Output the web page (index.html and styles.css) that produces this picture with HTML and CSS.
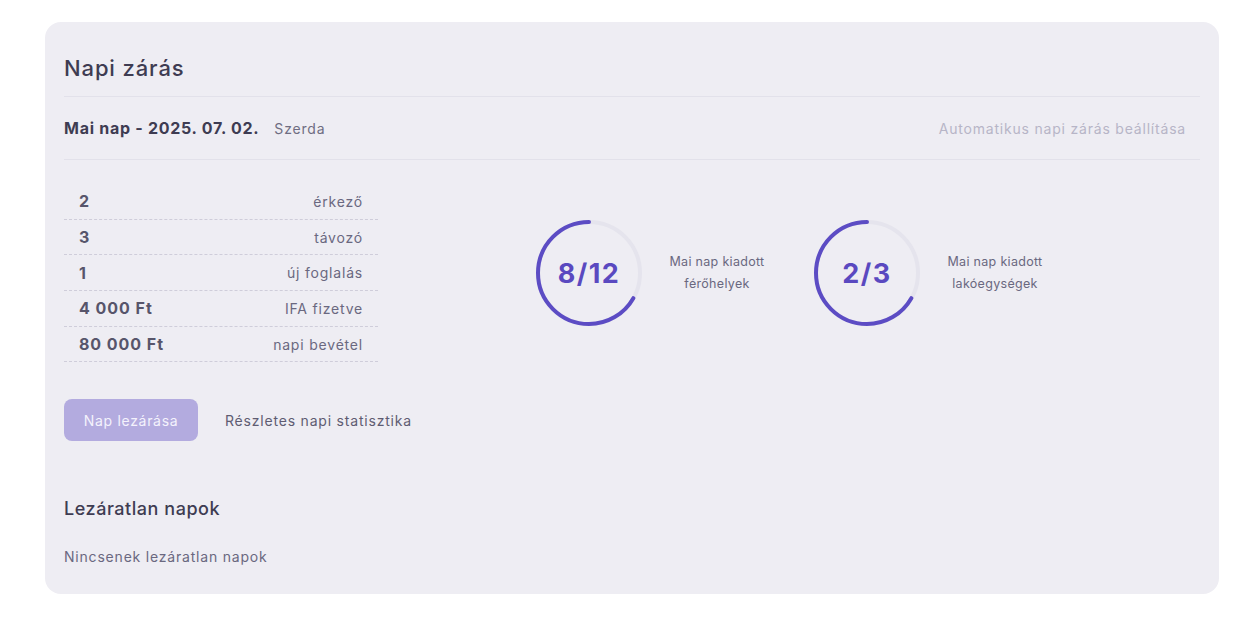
FILE: index.html
```html
<!DOCTYPE html>
<html lang="hu">
<head>
    <meta charset="UTF-8">
    <meta name="viewport" content="width=device-width, initial-scale=1.0">
    <title>Napi zárás</title>
    <link rel="stylesheet" href="styles.css">
</head>
<body>
    <div class="card">
        <h2 class="card-title">Napi zárás</h2>

        <div class="day-row">
            <div class="day-info">
                <span class="day-date">Mai nap - 2025. 07. 02.</span>
                <span class="day-name">Szerda</span>
            </div>
            <a href="#" class="auto-link">Automatikus napi zárás beállítása</a>
        </div>

        <div class="summary">
            <div class="stats">
                <div class="stat-row"><span class="stat-value">2</span><span class="stat-label">érkező</span></div>
                <div class="stat-row"><span class="stat-value">3</span><span class="stat-label">távozó</span></div>
                <div class="stat-row"><span class="stat-value">1</span><span class="stat-label">új foglalás</span></div>
                <div class="stat-row"><span class="stat-value">4 000 Ft</span><span class="stat-label">IFA fizetve</span></div>
                <div class="stat-row"><span class="stat-value">80 000 Ft</span><span class="stat-label">napi bevétel</span></div>
            </div>

            <div class="gauges">
                <div class="gauge">
                    <div class="ring">
                        <svg viewBox="0 0 108 108" width="108" height="108">
                            <circle class="ring-track" cx="54" cy="54" r="51"></circle>
                            <circle class="ring-bar" cx="54" cy="54" r="51" stroke-dasharray="213.6 320.4"></circle>
                        </svg>
                        <span class="ring-text">8/12</span>
                    </div>
                    <div class="gauge-label">Mai nap kiadott<br>férőhelyek</div>
                </div>
                <div class="gauge">
                    <div class="ring">
                        <svg viewBox="0 0 108 108" width="108" height="108">
                            <circle class="ring-track" cx="54" cy="54" r="51"></circle>
                            <circle class="ring-bar" cx="54" cy="54" r="51" stroke-dasharray="213.6 320.4"></circle>
                        </svg>
                        <span class="ring-text">2/3</span>
                    </div>
                    <div class="gauge-label">Mai nap kiadott<br>lakóegységek</div>
                </div>
            </div>
        </div>

        <div class="actions">
            <button class="close-button" disabled>Nap lezárása</button>
            <a href="#" class="stats-link">Részletes napi statisztika</a>
        </div>

        <h3 class="section-title">Lezáratlan napok</h3>
        <p class="empty-text">Nincsenek lezáratlan napok</p>
    </div>
</body>
</html>
```

FILE: styles.css
```css
/* Általános */
body {
    margin: 0;
    padding: 22px 29px 40px 45px;
    background-color: #ffffff;
    font-family: Inter, "Noto Sans", Arial, sans-serif;
    letter-spacing: 0.05em;
    color: #3e3c52;
}

.card {
    background-color: #eeedf3;
    border-radius: 16px;
    padding: 0 19px 27px 19px;
}

.card-title {
    margin: 0;
    padding: 32px 0 14px 0;
    font-size: 22px;
    line-height: 28px;
    font-weight: 500;
    letter-spacing: 0.04em;
    color: #3e3c52;
    border-bottom: 1px solid #e2e1ea;
}

/* Mai nap sor */
.day-row {
    display: flex;
    justify-content: space-between;
    align-items: center;
    padding: 20px 14px 19px 0;
    line-height: 22px;
    border-bottom: 1px solid #e2e1ea;
}

.day-info {
    display: flex;
    align-items: baseline;
    gap: 15px;
}

.day-date {
    font-size: 16px;
    font-weight: 700;
    letter-spacing: 0.045em;
    color: #3e3c52;
}

.day-name {
    font-size: 14px;
    color: #6f6d82;
}

.auto-link {
    font-size: 14px;
    color: #b7b5c7;
    text-decoration: none;
}

/* Összesítő */
.summary {
    display: flex;
    align-items: center;
    margin-top: 24px;
}

.stats {
    width: 314px;
}

.stat-row {
    display: flex;
    justify-content: space-between;
    align-items: center;
    height: 34.7px;
    padding: 0 15px;
    border-bottom: 1px dashed #cfcdda;
}

.stat-value {
    font-size: 16px;
    font-weight: 700;
    letter-spacing: 0.06em;
    color: #57556b;
}

.stat-label {
    font-size: 14px;
    color: #6a6880;
}

.gauges {
    display: flex;
    gap: 36px;
    margin-left: 157px;
}

.gauge {
    display: flex;
    align-items: center;
    gap: 14px;
}

.ring {
    position: relative;
    width: 108px;
    height: 108px;
}

.ring svg {
    display: block;
}

.ring-track {
    fill: none;
    stroke: #e5e4ed;
    stroke-width: 4;
}

.ring-bar {
    fill: none;
    stroke: #5c4cc4;
    stroke-width: 4;
    stroke-linecap: round;
    transform: rotate(-90deg) scaleY(-1);
    transform-origin: 54px 54px;
}

.ring-text {
    position: absolute;
    inset: 0;
    display: flex;
    align-items: center;
    justify-content: center;
    font-size: 27px;
    font-weight: 700;
    letter-spacing: 0.055em;
    color: #5a49c0;
}

.gauge-label {
    width: 120px;
    text-align: center;
    font-size: 12.5px;
    line-height: 22px;
    letter-spacing: 0.025em;
    color: #6a6880;
}

/* Gombok */
.actions {
    display: flex;
    align-items: center;
    gap: 27px;
    margin-top: 37px;
}

.close-button {
    height: 42px;
    width: 134px;
    border: none;
    border-radius: 8px;
    background-color: #b3abdf;
    color: #f4f2fc;
    font-family: inherit;
    font-size: 14px;
    letter-spacing: 0.05em;
}

.stats-link {
    font-size: 14px;
    color: #5e5c72;
    text-decoration: none;
}

.section-title {
    margin: 56px 0 0 0;
    font-size: 18px;
    line-height: 24px;
    font-weight: 500;
    letter-spacing: 0.03em;
    color: #3e3c52;
}

.empty-text {
    margin: 26px 0 0 0;
    font-size: 14px;
    line-height: 20px;
    color: #6a6880;
}
```
